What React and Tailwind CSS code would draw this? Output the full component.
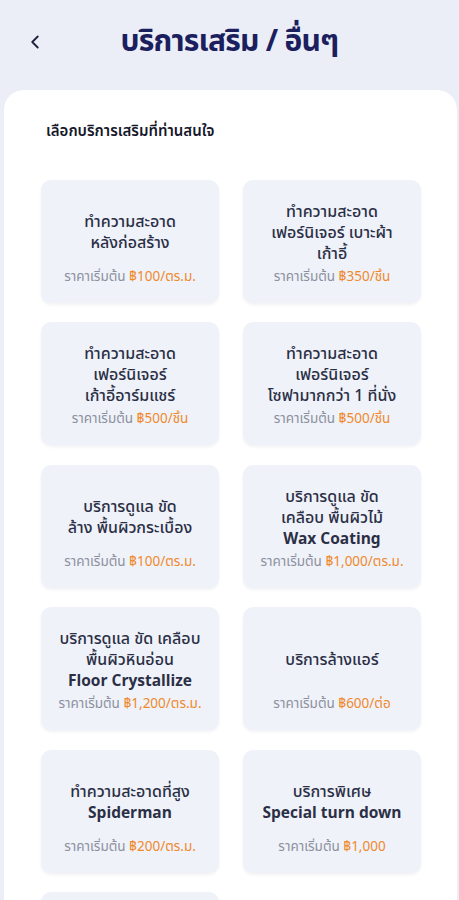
import { ChevronLeft } from "lucide-react";

const services = [
  { id: 1, lines: ["ทำความสะอาด", "หลังก่อสร้าง"], price: "฿100/ตร.ม." },
  { id: 2, lines: ["ทำความสะอาด", "เฟอร์นิเจอร์ เบาะผ้า", "เก้าอี้"], price: "฿350/ชิ้น" },
  { id: 3, lines: ["ทำความสะอาด", "เฟอร์นิเจอร์", "เก้าอี้อาร์มแชร์"], price: "฿500/ชิ้น" },
  { id: 4, lines: ["ทำความสะอาด", "เฟอร์นิเจอร์", "โซฟามากกว่า 1 ที่นั่ง"], price: "฿500/ชิ้น" },
  { id: 5, lines: ["บริการดูแล ขัด", "ล้าง พื้นผิวกระเบื้อง"], price: "฿100/ตร.ม." },
  { id: 6, lines: ["บริการดูแล ขัด", "เคลือบ พื้นผิวไม้"], en: "Wax Coating", price: "฿1,000/ตร.ม." },
  { id: 7, lines: ["บริการดูแล ขัด เคลือบ", "พื้นผิวหินอ่อน"], en: "Floor Crystallize", price: "฿1,200/ตร.ม." },
  { id: 8, lines: ["บริการล้างแอร์"], price: "฿600/ต่อ" },
  { id: 9, lines: ["ทำความสะอาดที่สูง"], en: "Spiderman", price: "฿200/ตร.ม." },
  { id: 10, lines: ["บริการพิเศษ"], en: "Special turn down", price: "฿1,000" },
  { id: 11, lines: ["บริการซักรีด"], price: "฿100/กก." },
];

export default function App() {
  return (
    <div
      className="min-h-screen bg-[#ebeef7] overflow-hidden"
      style={{ fontFamily: '"Noto Sans Thai", "Noto Sans", "Open Sans", sans-serif' }}
    >
      <header className="relative h-[90px] flex items-center justify-center">
        <button className="absolute left-[24px] top-[29px] text-[#1f2340]">
          <ChevronLeft className="w-[22px] h-[26px]" strokeWidth={2} />
        </button>
        <h1 className="text-[30px] font-bold text-[#1b1f5e] tracking-tight -mt-[6px]">
          บริการเสริม / อื่นๆ
        </h1>
      </header>

      <main className="ml-[4px] mr-[2px] bg-white rounded-t-[20px] pt-[31px] pb-8 pl-[37px] pr-[36px]">
        <h2 className="text-[15px] font-semibold text-[#15172a] mb-[36px] pl-[5px]">
          เลือกบริการเสริมที่ท่านสนใจ
        </h2>

        <div className="grid grid-cols-2 gap-x-[24px] gap-y-[19.5px]">
          {services.map((s) => (
            <div
              key={s.id}
              className="h-[123px] rounded-[10px] bg-[#eff2f9] shadow-[0_2px_3px_rgba(30,40,90,0.06)] flex flex-col items-center pt-5 pb-[16px] px-2 text-center"
            >
              <div className="flex-1 flex flex-col items-center justify-center">
                {s.lines.map((l) => (
                  <p key={l} className="text-[16px] leading-[21px] font-medium text-[#2b2f45] whitespace-nowrap">
                    {l}
                  </p>
                ))}
                {s.en && (
                  <p className="text-[15.5px] leading-[21px] font-bold text-[#2b2f45] whitespace-nowrap">{s.en}</p>
                )}
              </div>
              <p className="h-5 leading-5 text-[13.5px] text-[#8c909e] whitespace-nowrap">
                ราคาเริ่มต้น <span className="text-[#f0892c]">{s.price}</span>
              </p>
            </div>
          ))}
        </div>
      </main>
    </div>
  );
}
